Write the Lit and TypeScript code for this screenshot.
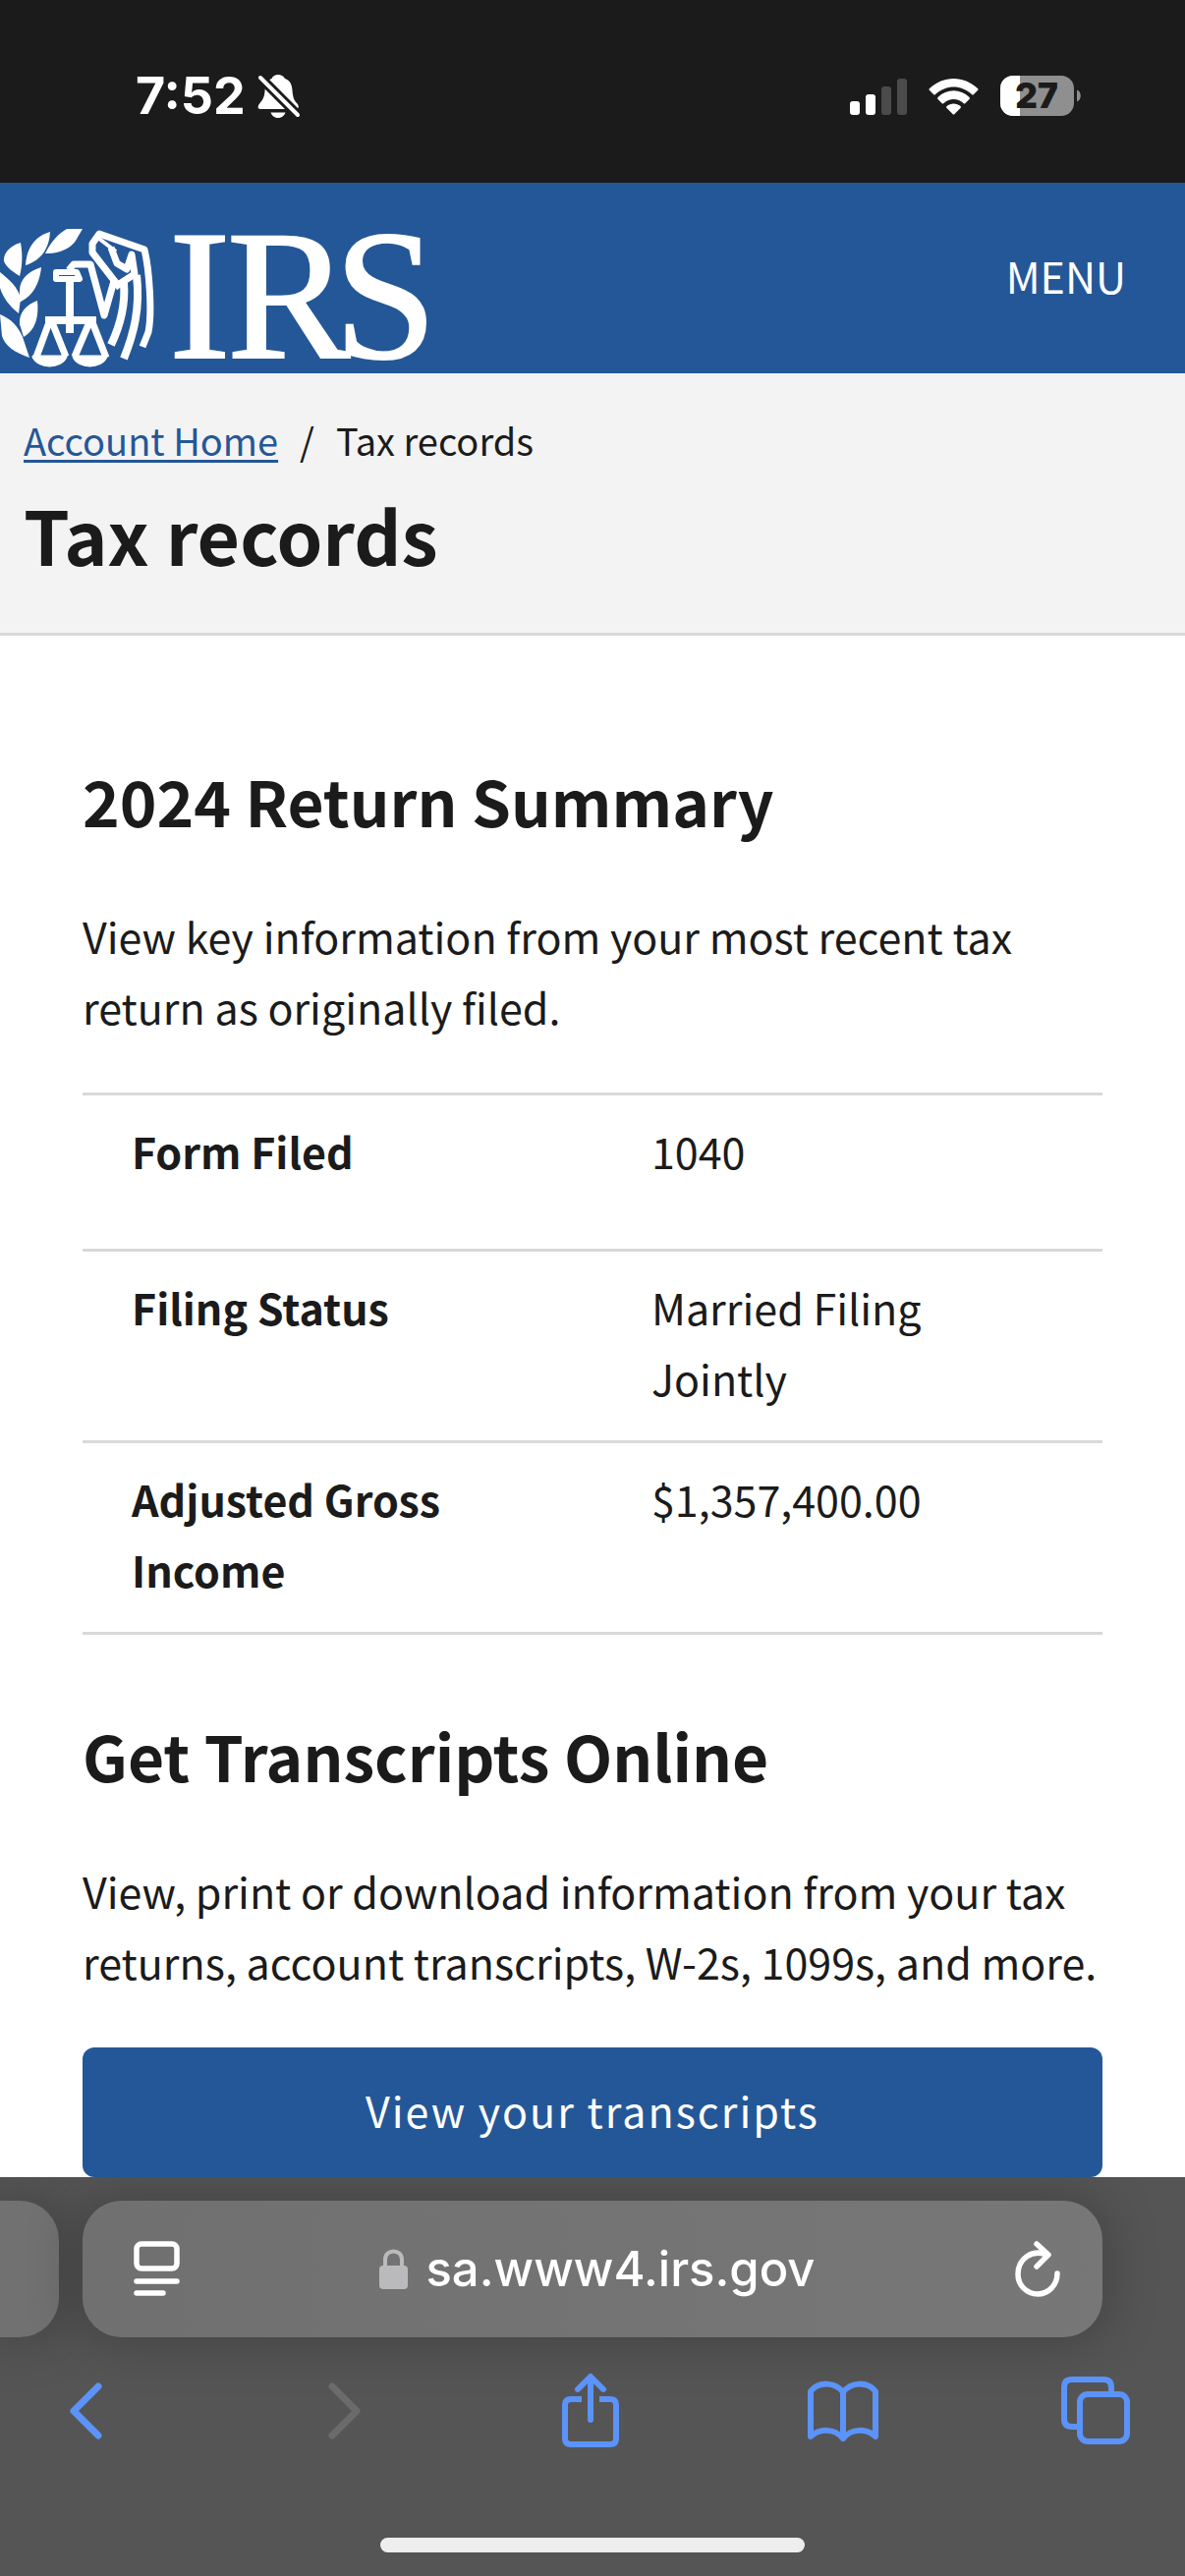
import { LitElement, html, css } from "lit";
import { customElement } from "lit/decorators.js";

const rows: [string, string][] = [
  ["Form Filed", "1040"],
  ["Filing Status", "Married Filing Jointly"],
  ["Adjusted Gross Income", "$1,357,400.00"],
];

@customElement("status-bar")
class StatusBar extends LitElement {
  static styles = css`
    :host { display: block; background: #1b1b1b; color: #fff; }
    .bar {
      display: flex; justify-content: space-between; align-items: center;
      height: 186px; box-sizing: border-box; padding: 10px 106px 0 138px;
      font-family: Inter, "Liberation Sans", sans-serif;
    }
    .group { display: flex; align-items: center; }
    .time { font-size: 52px; line-height: 60px; font-weight: 700; margin-right: 12px; }
    svg { display: block; }
    .signal { margin-right: 22px; }
    .wifi { margin-right: 22px; }
    .level { font: 900 35px Inter, "Liberation Sans", sans-serif; }
  `;
  render() {
    return html`<div class="bar">
      <div class="group">
        <span class="time">7:52</span>
        <svg width="44" height="46" viewBox="0 0 44 46" role="img" aria-label="Silent mode">
          <path fill="#fff" d="M21 1c-3 0-5 1-6.500 4C10 7 8 11 7.500 18C7 24 5 27 2.500 30C0 33 0 36 3 36H39C42 36 43 33 40 30C37 27 36 23 35.500 17C35 10 33 7 28 5C26 2 24 1 21 1ZM13.500 39.500H28.500C27 43.500 24 45 21 45S15 43.500 13.500 39.500Z"/>
          <path stroke="#1b1b1b" stroke-width="10" d="M1 2L44 45"/>
          <path stroke="#fff" stroke-width="4" stroke-linecap="round" d="M3 4L41 42"/>
        </svg>
      </div>
      <div class="group">
        <svg class="signal" width="58" height="38" viewBox="0 0 58 38" role="img" aria-label="Signal">
          <g fill="#fff"><rect y="24" width="10" height="14" rx="3"/><rect x="16" y="17" width="10" height="21" rx="3"/></g>
          <g fill="#4b4b4b"><rect x="32" y="9" width="10" height="29" rx="3"/><rect x="48" y="1" width="10" height="37" rx="3"/></g>
        </svg>
        <svg class="wifi" width="51" height="38" viewBox="0 0 51 38" fill="#fff" role="img" aria-label="Wi-Fi">
          <path d="M1 11C15-2.500 36-2.500 50 11Q51 12 50 13L46 17Q45 18 44 17C33 7 18 7 7 17Q6 18 5 17L1 13Q0 12 1 11Z"/>
          <path d="M9.500 20C18.500 11 32.500 11 41.500 20Q42.500 21 41.500 22L37.500 26Q36.500 27 35.500 26C29.500 20.500 21.500 20.500 15.500 26Q14.500 27 13.500 26L9.500 22Q8.500 21 9.500 20Z"/>
          <path d="M18.500 29C22.500 25.500 28.500 25.500 32.500 29Q33.500 30 32.500 31L26.500 37Q25.500 38 24.500 37L18.500 31Q17.500 30 18.500 29Z"/>
        </svg>
        <svg width="82" height="42" viewBox="0 0 82 42" role="img" aria-label="Battery 27 percent">
          <defs><clipPath id="cell"><rect width="75" height="41" rx="13"/></clipPath></defs>
          <rect width="75" height="41" rx="13" fill="#8f8f8f"/>
          <rect width="20" height="41" fill="#fff" clip-path="url(#cell)"/>
          <path d="M78 14.500C83 16 83 25 78 26.500Z" fill="#8f8f8f"/>
          <text class="level" x="37" y="33" text-anchor="middle" fill="#1b1b1b">27</text>
        </svg>
      </div>
    </div>`;
  }
}

@customElement("site-header")
class SiteHeader extends LitElement {
  static styles = css`
    :host { display: block; background: #245797; }
    .bar { display: flex; justify-content: space-between; align-items: center; height: 194px; }
    .brand { display: block; align-self: flex-end; }
    svg { display: block; overflow: visible; }
    .word { font: 188px "Liberation Serif", serif; }
    .menu {
      border: 0; background: none; color: #fff; padding: 0 0 6px; margin-right: 60px;
      font: 43px/72px "Noto Sans CJK SC", sans-serif;
    }
  `;
  render() {
    return html`<header class="bar">
      <a class="brand" href="#" aria-label="IRS">
        <svg width="450" height="194" viewBox="0 186 450 194">
          <g fill="#fff">
            <path d="M84 233H68C59 238 52 246 46 258C58 259 72 253 77 245Z"/>
            <path d="M51 236C37 240 27 251 26 270C39 266 50 256 51 236Z"/>
            <path d="M21 247C10 250 3 258 4 266C7 273 14 277 20 281C23 270 23 258 21 247Z"/>
            <path d="M42 272C29 276 20 284 20 296L19 308C31 303 40 292 42 272Z"/>
            <path d="M0 277C10 285 18 292 21 304L19 319C10 312 3 303 0 293Z"/>
            <path d="M38 306C27 310 19 318 20 330L24 343C34 337 40 326 38 306Z"/>
            <path d="M0 320C12 325 18 332 23 343L30 364C15 359 5 352 2 342Z"/>
          </g>
          <g fill="none" stroke="#fff" stroke-width="6" stroke-linejoin="round">
            <path d="M71 285V339" stroke-width="8"/>
            <path d="M57 277H78L81 284H57Z" stroke-width="6"/>
            <path d="M70 275L75 269H92L106 321L116 286" stroke-width="7"/>
            <path d="M122 293L94 257V248L101 238L147 254C152 275 155 318 151 338L145 353" stroke-width="7"/>
            <path d="M101 243L118 256" stroke-width="4"/>
            <path d="M46 326H98" stroke-width="8"/>
            <path d="M50 328L36 366M53 328L67 363M91 328L76 363M94 328L108 364" stroke-width="7"/>
            <path d="M34 363H67C62 375 39 375 34 363ZM75 363H108C103 375 80 375 75 363Z" fill="#fff" stroke-width="3"/>
            <path d="M126 288C128 312 122 332 113 351M139 280C143 314 136 340 126 365" stroke-width="8"/>
            <path d="M113 252L119 268L129 274L134 259L137 279L120 290" stroke-width="7"/>
          </g>
          <text class="word" x="172 231 340" y="364" fill="#fff" stroke="#fff" stroke-width="2">IRS</text>
        </svg>
      </a>
      <button class="menu" type="button">MENU</button>
    </header>`;
  }
}

@customElement("browser-chrome")
class BrowserChrome extends LitElement {
  static styles = css`
    :host { display: block; background: #555; overflow: hidden; }
    .tabs { display: grid; grid-template-columns: 60px 1fr 60px; gap: 24px; padding-top: 24px; }
    .tab, .address { background: #717171; height: 139px; box-shadow: 0 0 50px 10px rgba(0, 0, 0, 0.18); }
    .tab { border-radius: 0 40px 40px 0; }
    .address {
      display: flex; align-items: center; justify-content: space-between; box-sizing: border-box;
      padding: 0 42px 0 52px; border-radius: 40px; background: linear-gradient(90deg, #707070, #777);
    }
    .site { display: flex; align-items: center; gap: 18px; color: #fff; text-decoration: none;
      font: 500 49px/60px Inter, "Liberation Sans", sans-serif; }
    button { border: 0; background: none; padding: 0; color: inherit; }
    svg { display: block; fill: none; stroke-linecap: round; stroke-linejoin: round; }
    .light { color: #fff; }
    .tools { display: flex; justify-content: space-between; align-items: center; padding: 36px 54px 0 50px; color: #5b93f8; }
    .tools button { display: flex; justify-content: center; width: 74px; }
    .tools .off { color: #6b6b6b; }
    .home { width: 432px; height: 15px; border-radius: 8px; background: #eee; margin: 90px auto 24px; }
  `;
  render() {
    return html`
      <div class="tabs">
        <div class="tab"></div>
        <div class="address">
          <button class="light" type="button" aria-label="Page settings">
            <svg width="48" height="58" viewBox="0 0 48 58" stroke="currentColor" stroke-width="5.500">
              <rect x="3" y="3" width="41" height="25" rx="5"/><path d="M3 41H44M3 53H30"/>
            </svg>
          </button>
          <a class="site" href="#">
            <svg width="29" height="42" viewBox="0 0 29 42">
              <path d="M6 18V11C6 -0.500 23 -0.500 23 11V18" stroke="#bababd" stroke-width="4"/>
              <rect y="17" width="29" height="24" rx="4" fill="#bababd"/>
            </svg>
            <span>sa.www4.irs.gov</span>
          </a>
          <button class="light" type="button" aria-label="Reload">
            <svg width="48" height="58" viewBox="0 0 48 58" stroke="currentColor" stroke-width="5.500">
              <path d="M34 14C18 8 4 18 4 34C4 45 13 54 24 54S44 45 44 33M23 3L35 14L23 26"/>
            </svg>
          </button>
        </div>
        <div></div>
      </div>
      <nav class="tools">
        <button type="button" aria-label="Back"><svg width="37" height="60" viewBox="0 0 37 60" stroke="currentColor" stroke-width="7"><path d="M31 5L6 30L31 55"/></svg></button>
        <button class="off" type="button" aria-label="Forward" disabled><svg width="49" height="60" viewBox="-12 0 49 60" stroke="currentColor" stroke-width="7"><path d="M6 5L31 30L6 55"/></svg></button>
        <button type="button" aria-label="Share"><svg width="60" height="78" viewBox="0 0 60 78" stroke="currentColor" stroke-width="6"><path stroke-linecap="butt" d="M21 27H10Q4 27 4 33V67Q4 73 10 73H50Q56 73 56 67V33Q56 27 50 27H39"/><path d="M30 48V6M17 17L30 4L43 17"/></svg></button>
        <button type="button" aria-label="Bookmarks"><svg width="74" height="64" viewBox="0 0 74 64" stroke="currentColor" stroke-width="6"><path d="M37 13C29 2 12 2 4 12V58C13 50 28 49 37 60C46 49 61 50 70 58V12C62 2 45 2 37 13ZM37 13V59"/></svg></button>
        <button type="button" aria-label="Tabs"><svg width="72" height="72" viewBox="0 0 72 72" stroke="currentColor" stroke-width="6"><path stroke-linecap="butt" d="M18 52H12Q4 52 4 44V12Q4 4 12 4H44Q52 4 52 12V18"/><rect x="20" y="19" width="48" height="48" rx="8"/></svg></button>
      </nav>
      <div class="home"></div>`;
  }
}

@customElement("app-root")
class AppRoot extends LitElement {
  static styles = css`
    :host {
      display: flex; flex-direction: column; min-height: 100vh; background: #fff; color: #1b1b1b;
      font: 43px/72px "Noto Sans CJK SC", sans-serif;
    }
    .title { background: #f3f3f3; border-bottom: 3px solid #d9d9d9; padding: 38px 24px 52px; }
    .crumbs { display: flex; gap: 22px; font-size: 38px; line-height: 60px; }
    .crumbs a { color: #245797; text-decoration-thickness: 3px; text-underline-offset: 4px; }
    h1 { margin: 18px 0 0; font-size: 75px; line-height: 96px; font-weight: 700; }
    main { flex: 1; padding: 125px 84px 0; }
    h2 { margin: 0; font-size: 64px; line-height: 84px; font-weight: 700; }
    p { margin: 60px 0 52px; }
    table { width: 100%; border-collapse: collapse; table-layout: fixed; margin-bottom: 80px; }
    tr { border-top: 3px solid #d9d9d9; }
    tr:last-child { border-bottom: 3px solid #d9d9d9; }
    th, td { height: 108px; padding: 20px 50px 28px; text-align: left; vertical-align: top; font-weight: 400; }
    th { font-weight: 700; width: 429px; }
    .go {
      display: block; width: 100%; height: 132px; border: 0; border-radius: 12px; background: #245797;
      color: #fff; font: 43px/72px "Noto Sans CJK SC", sans-serif; letter-spacing: 2px; padding: 0 0 6px;
    }
  `;
  render() {
    return html`
      <status-bar></status-bar>
      <site-header></site-header>
      <div class="title">
        <nav class="crumbs"><a href="#">Account Home</a><span>/</span><span>Tax records</span></nav>
        <h1>Tax records</h1>
      </div>
      <main>
        <h2>2024 Return Summary</h2>
        <p>View key information from your most recent tax return as originally filed.</p>
        <table>
          <tbody>${rows.map(([k, v]) => html`<tr><th scope="row">${k}</th><td>${v}</td></tr>`)}</tbody>
        </table>
        <h2>Get Transcripts Online</h2>
        <p>View, print or download information from your tax returns, account transcripts, W-2s, 1099s, and more.</p>
        <button class="go" type="button">View your transcripts</button>
      </main>
      <browser-chrome></browser-chrome>`;
  }
}
